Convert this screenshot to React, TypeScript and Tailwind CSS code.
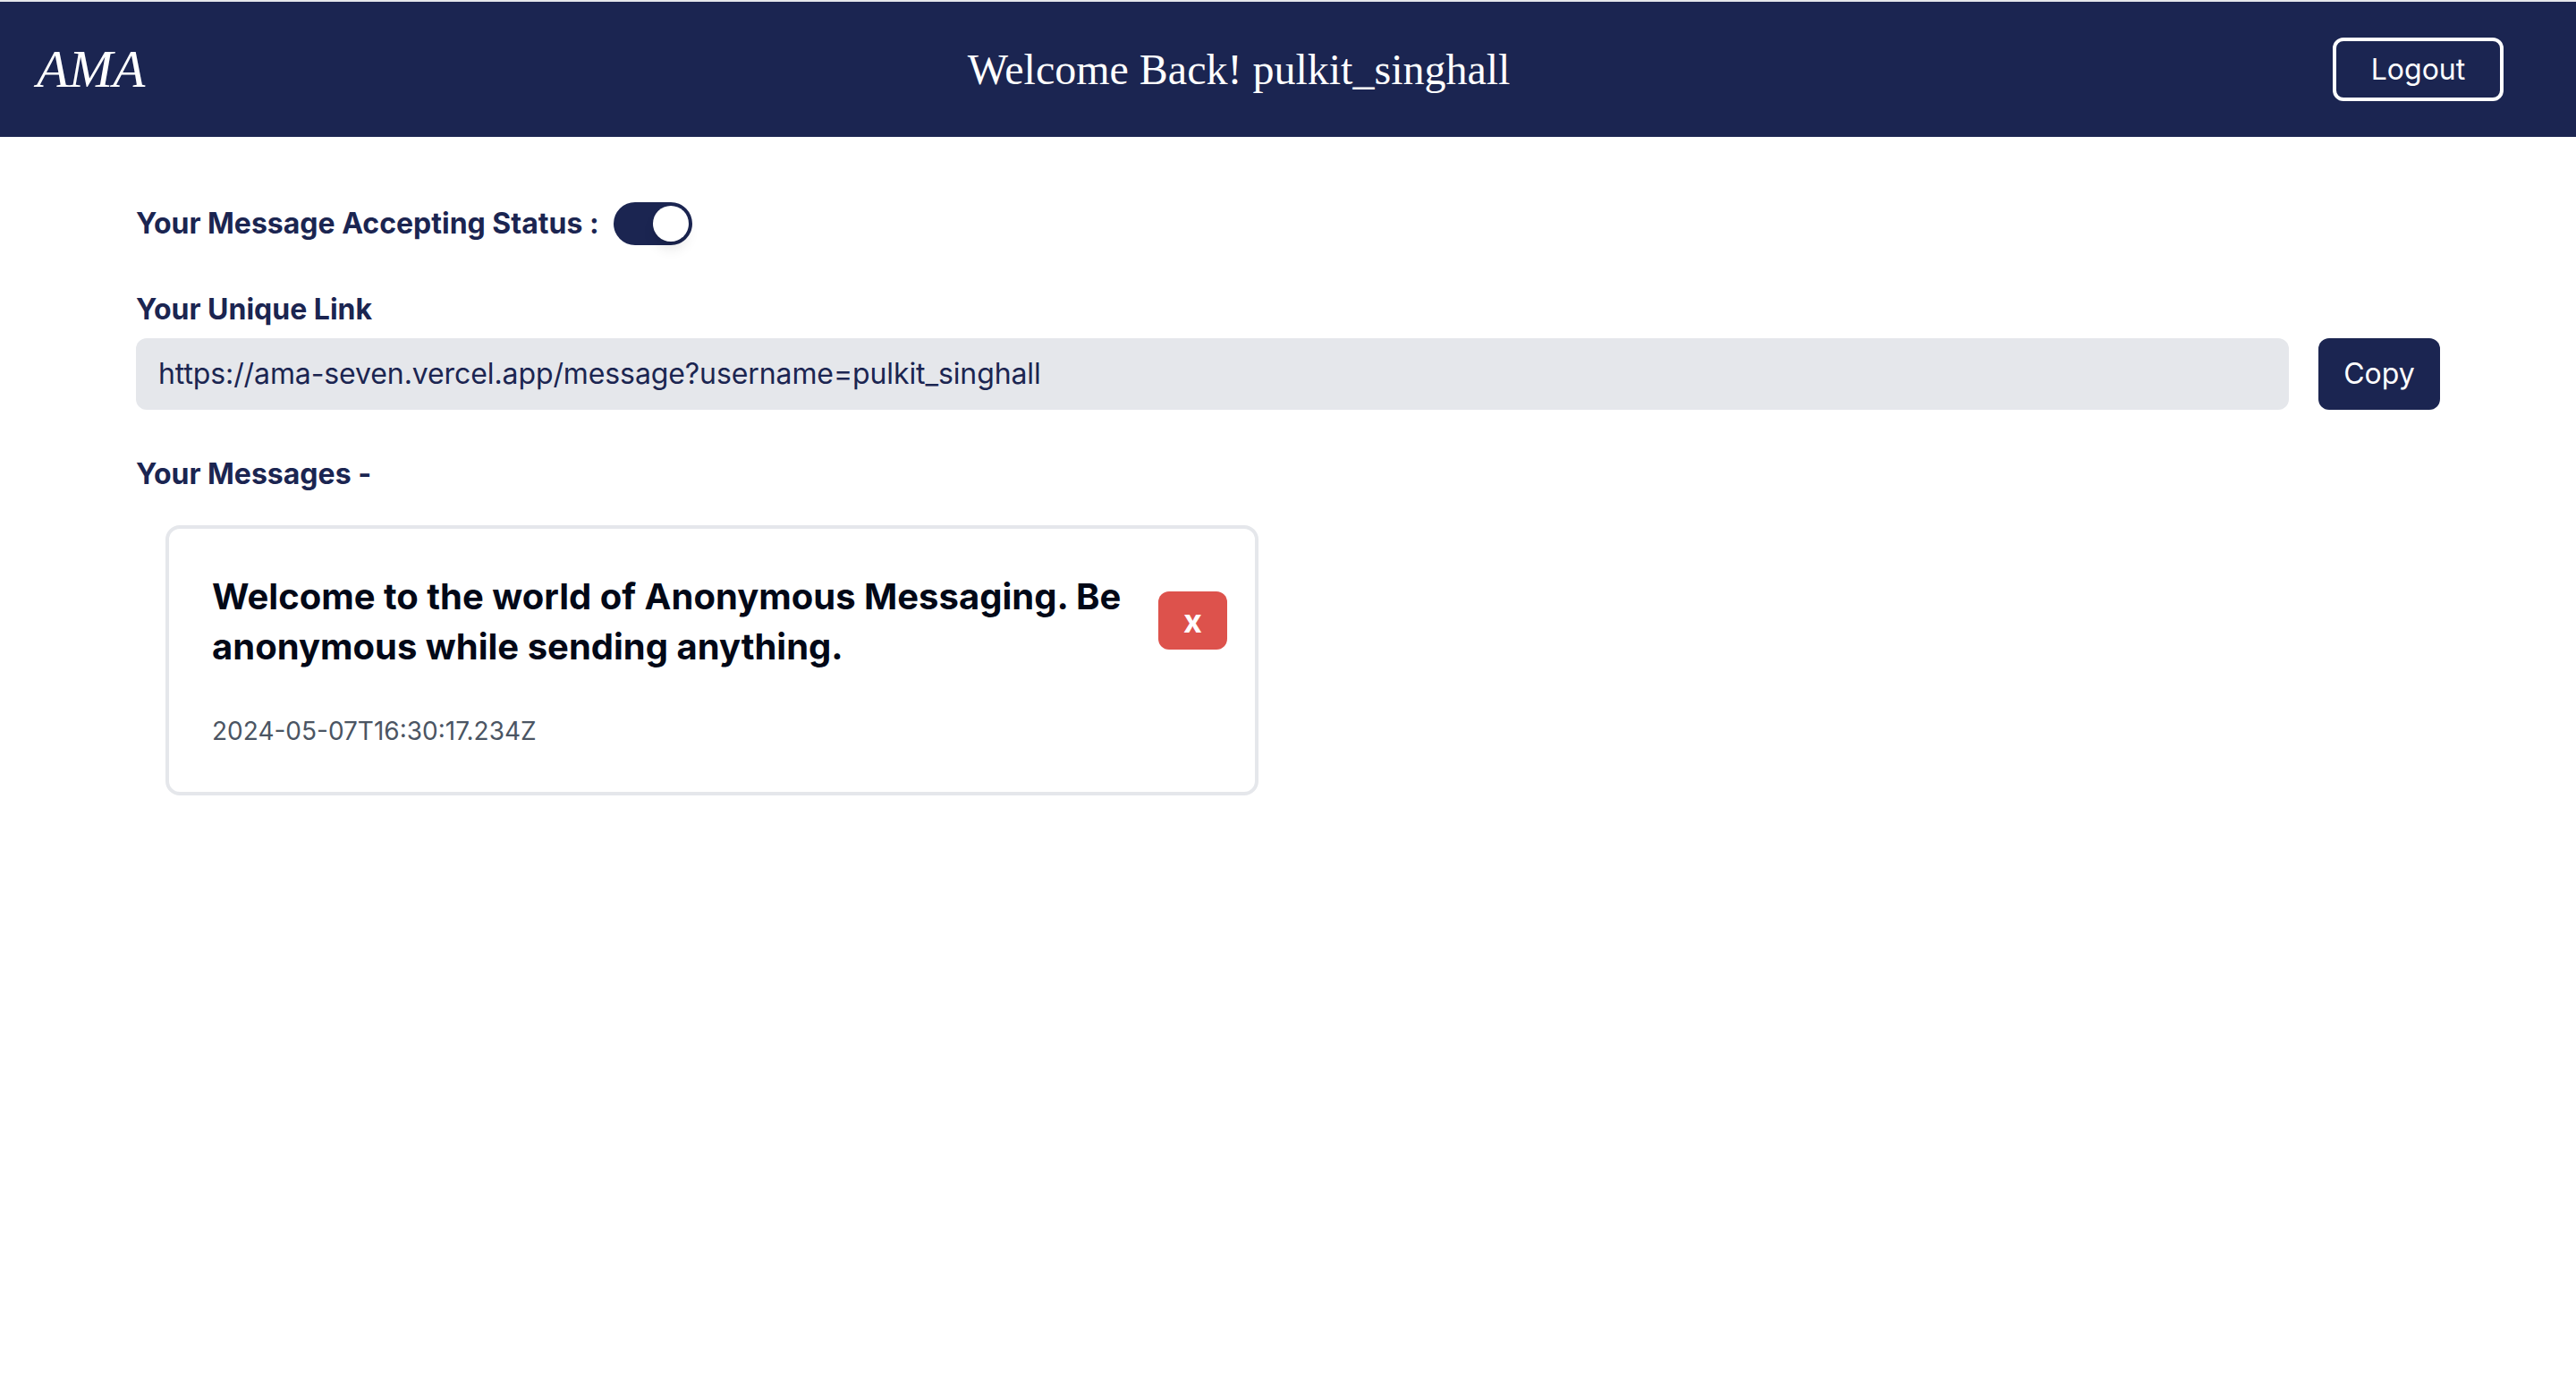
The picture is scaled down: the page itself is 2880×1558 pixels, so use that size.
import React from 'react';

const navy = 'bg-[#1b2551]';

function Navbar() {
  return (
    <nav className={`${navy} h-[151px] flex items-center justify-between pl-[41px] pr-[81px]`}>
      <span className="font-['Liberation_Serif',serif] italic text-[59px] leading-none text-white">AMA</span>
      <span className="font-['Liberation_Serif',serif] text-[48px] leading-none text-white">
        Welcome Back! pulkit_singhall
      </span>
      <button className="w-[191px] h-[71px] border-[4px] border-white rounded-[12px] text-white text-[32px] font-['Inter',sans-serif]">
        Logout
      </button>
    </nav>
  );
}

function Toggle() {
  return (
    <div className="w-[88px] h-[48px] rounded-full bg-[#1b2551] flex items-center justify-end px-[4px]">
      <div className="w-[40px] h-[40px] rounded-full bg-white shadow-[0_10px_15px_-3px_rgba(0,0,0,0.12),0_4px_6px_-4px_rgba(0,0,0,0.1)]" />
    </div>
  );
}

function MessageCard({ text, date }: { text: string; date: string }) {
  return (
    <div className="border-[4px] border-[#e5e7eb] rounded-[16px] bg-white">
      <div className="flex items-start justify-between gap-[40px] pl-[48px] pr-[31px] pt-[48px] pb-[46px]">
        <h3 className="text-[40px] leading-[56px] font-bold text-[#020817]">{text}</h3>
        <button className="shrink-0 mt-[22px] w-[77px] h-[65px] rounded-[12px] bg-[#dd524c] text-white text-[36px] font-bold leading-none flex items-center justify-center">
          x
        </button>
      </div>
      <div className="pl-[48px] pb-[48px]">
        <p className="text-[28px] leading-[40px] text-[#4b5563]">{date}</p>
      </div>
    </div>
  );
}

export default function App() {
  return (
    <div className="min-h-screen bg-white font-['Inter',sans-serif]">
      <div className="h-[2px] bg-[#e5e7eb]" />
      <Navbar />
      <main className="px-[152px] pt-[73px]">
        <div className="flex items-center gap-[16px]">
          <h2 className="text-[32px] leading-[48px] font-bold text-[#1b2551]">Your Message Accepting Status :</h2>
          <Toggle />
        </div>

        <h2 className="mt-[48px] text-[32px] leading-[48px] font-bold text-[#1b2551]">Your Unique Link</h2>
        <div className="mt-[8px] flex items-center gap-[33px]">
          <div className="flex-1 h-[80px] rounded-[12px] bg-[#e5e7eb] flex items-center px-[25px]">
            <span className="text-[32px] text-[#1b2551] tracking-[-0.1px]">
              https://ama-seven.vercel.app/message?username=pulkit_singhall
            </span>
          </div>
          <button className="w-[136px] h-[80px] rounded-[12px] bg-[#1b2551] text-white text-[32px]">Copy</button>
        </div>

        <h2 className="mt-[48px] text-[32px] leading-[48px] font-bold text-[#1b2551]">Your Messages -</h2>
        <div className="mt-[33px] grid grid-cols-2 gap-[66px] px-[33px]">
          <MessageCard
            text="Welcome to the world of Anonymous Messaging. Be anonymous while sending anything."
            date="2024-05-07T16:30:17.234Z"
          />
        </div>
      </main>
    </div>
  );
}
